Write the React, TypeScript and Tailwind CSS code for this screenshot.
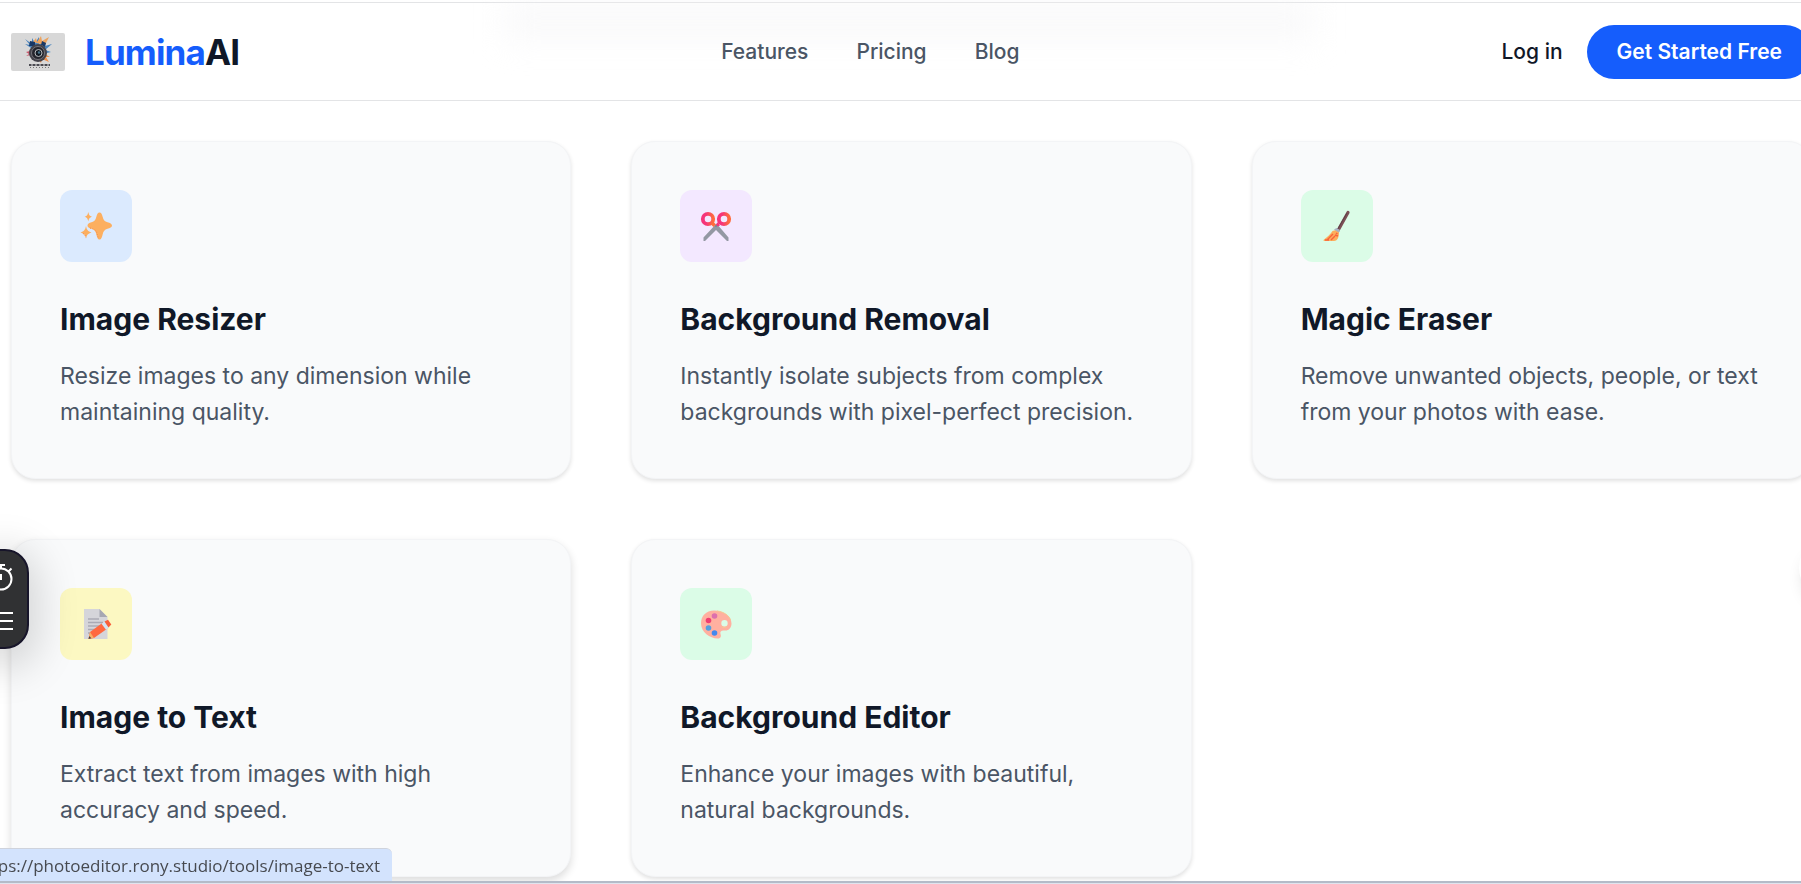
import type { ReactNode } from 'react'

interface Tool {
  title: string
  description: string
  tint: string
  shadow: string
  icon: ReactNode
}

const CARD_SHADOW = 'shadow-[0_2px_4px_rgba(0,0,0,0.12)]'
const CARD_SHADOW_RAISED = 'shadow-[0_4px_9px_rgba(0,0,0,0.14)]'

function SparklesIcon() {
  return (
    <svg viewBox="0 0 32 32" className="w-8 h-8" aria-hidden="true">
      <g fill="#fcaf60">
        <path d="M19.5 2.500c1.800 0 2.500 1.800 3.200 4.500.8 3.200 1.800 4.300 4.800 5.200 2.500.8 4.500 1.500 4.500 3.300s-2 2.500-4.500 3.300c-3 1-4 2.200-4.800 5.400-.7 2.900-1.400 5.300-3.200 5.300s-2.500-2.400-3.200-5.300c-.8-3.200-1.800-4.400-4.800-5.400C9 18 7.500 17.300 7.500 15.500S9 13 11.500 12.200c3-.9 4-2 4.800-5.200.7-2.700 1.400-4.500 3.200-4.500z" />
        <path d="M8.300 2c.8 3.200 1.200 3.900 3.900 4.800-2.700.9-3.100 1.500-3.900 4.700-.8-3.200-1.200-3.800-3.700-4.700 2.500-.9 2.900-1.600 3.700-4.800zM6 16c1 4.300 1.800 5.200 5.500 6.500-3.700 1.300-4.500 2.200-5.500 6-1-3.800-1.800-4.700-5.500-6 3.700-1.300 4.500-2.200 5.500-6.500z" />
      </g>
      <path d="M10 18c3 1 5.500 1.500 6.500 4s1 4.500 2.500 6.500M3 23.500c1.500.5 2 1.500 3 4" fill="none" stroke="#f58a4f" strokeWidth="1" strokeDasharray="1 1.500" />
    </svg>
  )
}

function ScissorsIcon() {
  return (
    <svg viewBox="0 0 32 32" className="w-8 h-8" aria-hidden="true">
      <defs>
        <linearGradient id="scissorHandle">
          <stop offset=".3" stopColor="#f5347a" />
          <stop offset="1" stopColor="#ff6c3d" />
        </linearGradient>
      </defs>
      <path d="M16.500 13.500 3.500 27.500v3.500h1.500L16 20l11 11h1.500v-3.500z" fill="#9398a3" />
      <circle cx="8" cy="9" r="5.200" fill="none" stroke="url(#scissorHandle)" strokeWidth="3.800" />
      <circle cx="24" cy="9" r="5.200" fill="none" stroke="url(#scissorHandle)" strokeWidth="3.800" />
      <path d="m10.500 14 3-2 2.500 2.500-2.500 2.500z" fill="#ff6c3d" />
      <path d="m18 12 2 3.500-2.500 1-1.500-2z" fill="#f5347a" />
      <circle cx="16" cy="16" r="1" fill="#7e828c" />
    </svg>
  )
}

function BroomIcon() {
  return (
    <svg viewBox="0 0 32 32" className="w-8 h-8" aria-hidden="true">
      <path d="M27 2.500 17 20.500" stroke="#7c5055" strokeWidth="3.200" strokeLinecap="round" />
      <path d="M26 3 16.500 19.500" stroke="#5e3f48" strokeWidth="1" />
      <path d="M11.500 21c-2 3-5 6-8.500 8.500-.8.8-.5 1.500.5 1.500H13c4 0 5-4.500 5-9l-3-2z" fill="#fcae5c" />
      <path d="m7 29 5-5m-2 6 4-4m-8 4 4-4m4-1 3 1m-2-3 1.500 1M4 30h4" stroke="#f9633b" strokeWidth="1.400" />
      <path d="m13 19.500 5 3 1-2.500-3.500-2z" fill="#a9b2c3" />
    </svg>
  )
}

function MemoIcon() {
  return (
    <svg viewBox="0 0 32 32" className="w-8 h-8" aria-hidden="true">
      <path d="M4 1h15.500l8 8v22H4z" fill="#d5d5da" />
      <path d="M19.500 1v8h8z" fill="#a6a7b2" />
      <path d="M8 11h11M8 14.500h15M8 18h15M8 21.500h9M8 25h7" stroke="#aaaab5" strokeWidth="1.500" />
      <path d="m8.500 31 1.500-7 13-9.500 4.500 6L14 30z" fill="#ff6940" />
      <path d="m8.500 31 1.500-7 4 6z" fill="#f6b168" />
      <path d="m8.500 31 .8-3 2 2.300z" fill="#46464f" />
      <path d="m21.500 15.700 3-2.200 4.500 6-3 2.200z" fill="#d3e4f2" />
      <path d="m24.500 13.500 3.500-1.800 3.300 4.800-2.800 3z" fill="#f95f39" />
    </svg>
  )
}

function PaletteIcon() {
  return (
    <svg viewBox="0 0 32 32" className="w-8 h-8" aria-hidden="true">
      <path
        fillRule="evenodd"
        d="M14 2.500C6 2.500 1 8 1 15.500 1 24 10 30.500 17.500 30.500c3 0 4-2 3-4.500-.8-2.500 1-4 4-3.500 4 .5 7-2.500 7-7C31.500 8 23 2.500 14 2.500zM24.500 12a3.200 3.200 0 1 1 0 6.400 3.200 3.200 0 0 1 0-6.400z"
        fill="#ffb0a0"
      />
      <path d="M17 3c7 .8 12 4.500 13.500 9M21.500 18.500c1.500 1.500 4 1.500 5.500 0" stroke="#f5c892" strokeWidth="1" fill="none" />
      <circle cx="14.500" cy="8" r="2.800" fill="#dc70ad" />
      <circle cx="8.500" cy="12.500" r="2.800" fill="#ef3e72" />
      <circle cx="8.500" cy="20" r="2.800" fill="#559fde" />
      <circle cx="14.500" cy="25" r="2.800" fill="#4389ee" />
    </svg>
  )
}

const TOOLS: Tool[] = [
  { title: 'Image Resizer', description: 'Resize images to any dimension while maintaining quality.', tint: 'bg-blue-100', shadow: CARD_SHADOW, icon: <SparklesIcon /> },
  { title: 'Background Removal', description: 'Instantly isolate subjects from complex backgrounds with pixel-perfect precision.', tint: 'bg-purple-100', shadow: CARD_SHADOW, icon: <ScissorsIcon /> },
  { title: 'Magic Eraser', description: 'Remove unwanted objects, people, or text from your photos with ease.', tint: 'bg-green-100', shadow: CARD_SHADOW, icon: <BroomIcon /> },
  { title: 'Image to Text', description: 'Extract text from images with high accuracy and speed.', tint: 'bg-[#fcf8c2]', shadow: CARD_SHADOW_RAISED, icon: <MemoIcon /> },
  { title: 'Background Editor', description: 'Enhance your images with beautiful, natural backgrounds.', tint: 'bg-green-100', shadow: CARD_SHADOW, icon: <PaletteIcon /> },
]

function LogoMark() {
  return (
    <svg viewBox="0 0 54 38" className="w-[54px] h-[38px] rounded-xs" aria-hidden="true">
      <rect width="54" height="38" fill="#d8d8d8" />
      <path d="m20 15-6-4 5 1-5-6 7 5 0-6 3 5 4-6v7l5-2-3 5 11-3-7 6 6 2-8 2z" fill="#4a84be" />
      <path d="m22 9 3-4 1 4 4-6 1 5 7-4-4 8z" fill="#eda35e" />
      <path d="m34 21 5 3-4 0 3 5-7-3-1 4-3-4z" fill="#f0904d" />
      <path d="m19 18-4 1 3 2-3 2 5-1z" fill="#c9566a" />
      <path d="m19 8 5 1v4h-6zM31 8l4 2-1 4-4-2z" fill="#183765" />
      <circle cx="27" cy="20" r="9" fill="#44434b" />
      <circle cx="27" cy="20" r="6.500" fill="#25252d" stroke="#77757b" />
      <circle cx="27.500" cy="20" r="3.500" fill="#111923" stroke="#b8babd" />
      <circle cx="28" cy="19.500" r="1.200" fill="#48758e" />
      <path d="M18 32h21" stroke="#4b4b52" strokeWidth="2" strokeDasharray="2 .5 1 .5" />
      <path d="M19 34.500h19" stroke="#777" strokeWidth="1" strokeDasharray="1 2" />
    </svg>
  )
}

function Header() {
  return (
    <header className="relative border-y border-[#e3e4e6] mt-[2px]">
      <div className="absolute left-[28%] right-[27%] top-0 h-9 bg-gray-100/50 blur-lg" />
      <div className="relative flex items-center justify-between h-[97px] pl-[11px] -mr-[11px]">
        <a href="#home" className="flex items-center gap-5">
          <LogoMark />
          <span className="text-[35px] leading-[48px] font-bold tracking-tight text-gray-900">
            <span className="text-[#155dfc]">Lumina</span>AI
          </span>
        </a>
        <nav className="flex gap-12 text-[21px] leading-[30px] font-medium text-gray-600">
          <a href="#features">Features</a>
          <a href="#pricing">Pricing</a>
          <a href="#blog">Blog</a>
        </nav>
        <div className="flex items-center gap-6 text-[21px] leading-[30px] font-medium">
          <a href="#login" className="text-gray-900">Log in</a>
          <button type="button" className="rounded-full bg-[#155dfc] px-[30px] py-3 font-semibold text-white">
            Get Started Free
          </button>
        </div>
      </div>
    </header>
  )
}

function ToolCard({ tool }: { tool: Tool }) {
  return (
    <a href="#tool" className={`block rounded-3xl border border-gray-100 bg-gray-50 p-12 ${tool.shadow}`}>
      <div className={`flex items-center justify-center w-[72px] h-[72px] rounded-xl mb-9 ${tool.tint}`}>{tool.icon}</div>
      <h3 className="text-[30px] leading-[42px] font-bold text-gray-900 mb-[18px]">{tool.title}</h3>
      <p className="text-[23px] leading-9 text-gray-600">{tool.description}</p>
    </a>
  )
}

function FloatingWidget() {
  return (
    <div className="fixed -left-6 top-[549px] flex w-[53px] flex-col items-end gap-5 rounded-3xl border-2 border-[#17152a] bg-[#303133] pt-3 pb-4 pr-[14px] shadow-[0_10px_40px_10px_rgba(0,0,0,0.15)]">
      <button type="button" aria-label="Timer" className="text-white">
        <svg viewBox="0 0 26 28" className="w-[26px] h-7" fill="none" stroke="currentColor" strokeWidth="2">
          <circle cx="14" cy="16" r="10.500" />
          <path d="M10 2h8M14 2v4M14 11v6M21.500 8.500l3-3" />
        </svg>
      </button>
      <button type="button" aria-label="Menu" className="text-white">
        <svg viewBox="0 0 24 20" className="w-6 h-5" stroke="currentColor" strokeWidth="2">
          <path d="M0 2h24M0 10h24M0 18h24" />
        </svg>
      </button>
    </div>
  )
}

export default function App() {
  return (
    <div className="relative min-h-screen overflow-hidden bg-white font-['Inter',sans-serif]">
      <Header />
      <main className="grid grid-cols-3 gap-[60px] pt-10 pl-[11px] -mr-[11px]">
        {TOOLS.map((tool) => (
          <ToolCard key={tool.title} tool={tool} />
        ))}
      </main>
      <FloatingWidget />
      <div className="fixed -right-16 top-[535px] w-[66px] h-[66px] rounded-full bg-white shadow-lg" />
      <div className="fixed bottom-[2px] left-0 flex h-[34px] w-[392px] items-center justify-end rounded-tr-md border-t border-[#cfd3dc] bg-[#d3e3fd] pr-3 text-[17px] leading-6 whitespace-nowrap text-[#474a50] font-['Open_Sans','Noto_Sans',sans-serif]">
        https://photoeditor.rony.studio/tools/image-to-text
      </div>
      <div className="fixed bottom-0 inset-x-0 h-[3px] border-t-2 border-[#b4bbc8] bg-[#e0e4ee]" />
    </div>
  )
}
